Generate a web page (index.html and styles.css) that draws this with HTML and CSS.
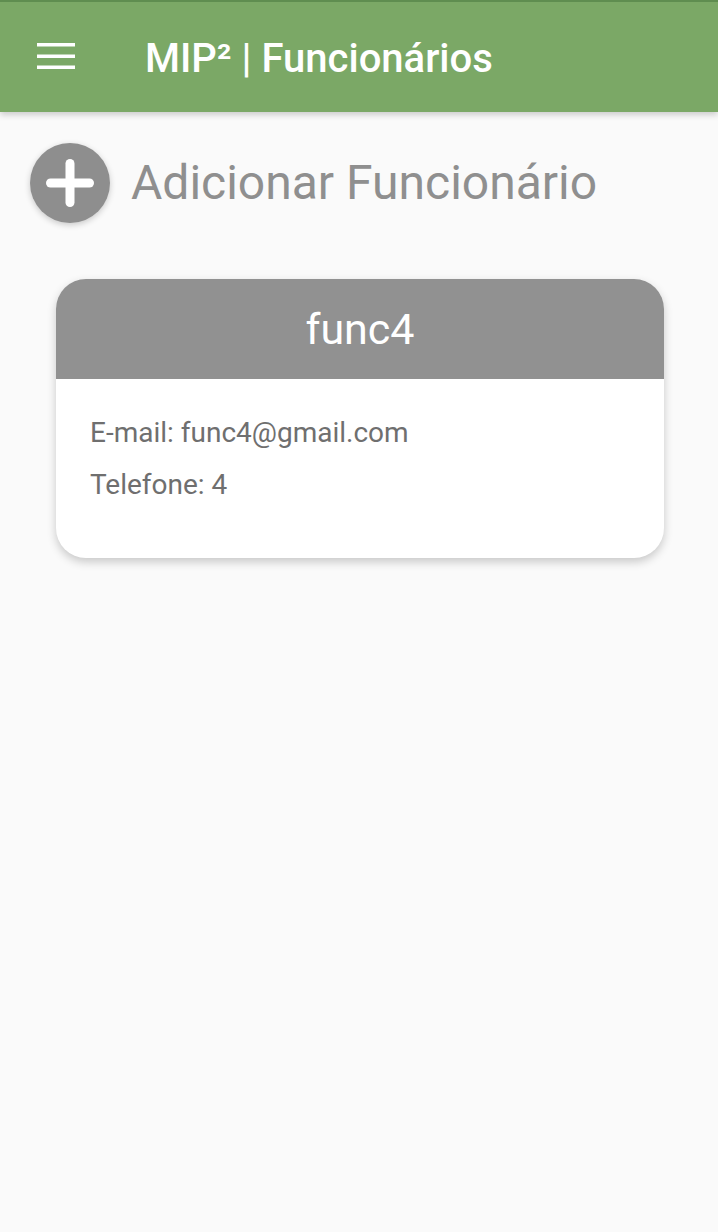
FILE: index.html
```html
<!DOCTYPE html>
<html lang="pt">
<head>
<meta charset="utf-8">
<title>MIP² | Funcionários</title>
<link rel="stylesheet" href="styles.css">
</head>
<body>
<header class="topbar">
  <svg class="menu" width="38" height="26" viewBox="0 0 38 26">
    <rect x="0" y="0" width="38" height="3.5" fill="#fff"/>
    <rect x="0" y="11.5" width="38" height="3.5" fill="#fff"/>
    <rect x="0" y="22.5" width="38" height="3.5" fill="#fff"/>
  </svg>
  <h1 class="title">MIP² | Funcionários</h1>
</header>
<main class="content">
  <div class="add-row">
    <div class="add-btn">
      <svg width="80" height="80" viewBox="0 0 80 80">
        <line x1="40" y1="20.5" x2="40" y2="59.5" stroke="#fff" stroke-width="9" stroke-linecap="round"/>
        <line x1="20.5" y1="40" x2="59.5" y2="40" stroke="#fff" stroke-width="9" stroke-linecap="round"/>
      </svg>
    </div>
    <span class="add-label">Adicionar Funcionário</span>
  </div>
  <section class="card">
    <div class="card-head">func4</div>
    <div class="card-body">
      <p class="line">E-mail: func4@gmail.com</p>
      <p class="line">Telefone: 4</p>
    </div>
  </section>
</main>
</body>
</html>
```
FILE: styles.css
```css
html, body {
  margin: 0;
  padding: 0;
}
body {
  background: #fafafa;
  font-family: Roboto, "Liberation Sans", Arial, sans-serif;
  width: 718px;
  height: 1232px;
  overflow: hidden;
}
.topbar {
  box-sizing: border-box;
  height: 112px;
  background: #7ba866;
  border-top: 2px solid #5f8d50;
  display: flex;
  align-items: center;
  padding-left: 37px;
  box-shadow: 0 3px 6px rgba(0, 0, 0, 0.18);
  position: relative;
  z-index: 1;
}
.menu {
  display: block;
  margin-top: -3px;
}
.title {
  margin: 4px 0 0 70px;
  color: #fff;
  font-size: 40px;
  font-weight: 500;
  letter-spacing: 0;
  line-height: 1;
}
.content {
  padding-top: 31px;
}
.add-row {
  display: flex;
  align-items: center;
  padding-left: 30px;
}
.add-btn {
  width: 80px;
  height: 80px;
  border-radius: 50%;
  background: #8e8e8e;
  box-shadow: 0 2px 6px rgba(0, 0, 0, 0.2);
}
.add-btn svg {
  display: block;
}
.add-label {
  margin-left: 21px;
  font-size: 48px;
  color: #8f8f8f;
  line-height: 1;
}
.card {
  margin: 56px 0 0 56px;
  width: 608px;
  border-radius: 30px;
  background: #fff;
  box-shadow: 0 4px 10px rgba(0, 0, 0, 0.2);
  overflow: hidden;
}
.card-head {
  height: 100px;
  background: #919191;
  color: #fff;
  font-size: 43px;
  display: flex;
  align-items: center;
  justify-content: center;
}
.card-body {
  padding: 28px 34px 47px;
}
.line {
  margin: 0;
  font-size: 28px;
  color: #6f6f6f;
  line-height: 52px;
}
```
